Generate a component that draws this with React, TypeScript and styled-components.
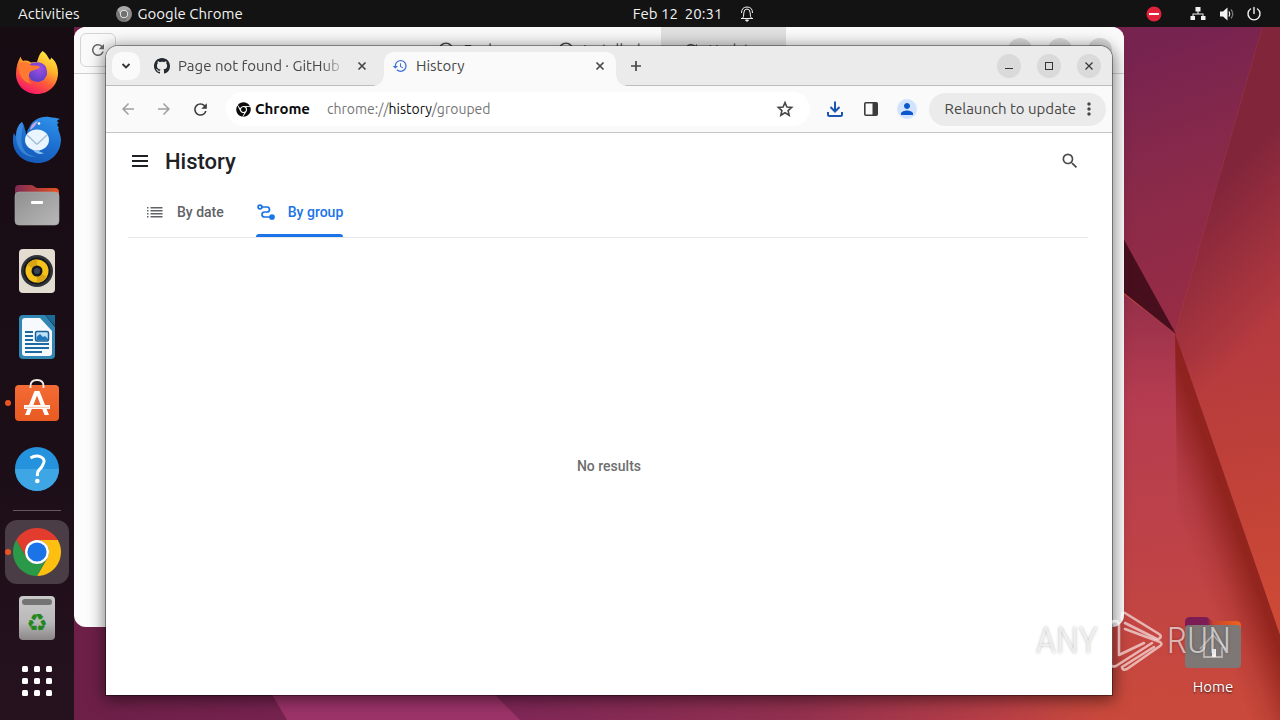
import React from "react";
import styled, { createGlobalStyle, css } from "styled-components";
import { FaChrome } from "react-icons/fa";
import {
  MdArrowBack,
  MdArrowForward,
  MdHistory,
  MdMoreVert,
  MdOutlineCheckCircle,
  MdOutlineExplore,
  MdPerson,
  MdRefresh,
  MdSearch,
} from "react-icons/md";

const uiFont = `"Ubuntu", "Noto Sans", "Open Sans", sans-serif`;

const GlobalStyle = createGlobalStyle`
  *, *::before, *::after { box-sizing: border-box; }
  body { margin: 0; font-family: ${uiFont}; font-size: 15px; line-height: 20px; }
  button { font: inherit; color: inherit; background: none; border: 0; padding: 0; margin: 0; }
  h1, p { margin: 0; }
  svg { display: block; flex: none; }
`;

const Desktop = styled.div`
  position: relative;
  display: flex;
  flex-direction: column;
  height: 100vh;
  overflow: hidden;
  background: #6a1e45;
`;

const WallpaperArt = styled.svg`
  position: absolute;
  inset: 0;
  width: 100%;
  height: 100%;
`;

/* ---------- top panel ---------- */

const TopPanel = styled.header`
  position: relative;
  display: flex;
  align-items: center;
  height: 27px;
  flex: none;
  background: #131313;
  color: #f2f2f2;
`;

const PanelSide = styled.div<{ $end?: boolean }>`
  flex: 1 1 0;
  display: flex;
  align-items: center;
  justify-content: ${(p) => (p.$end ? "flex-end" : "flex-start")};
  padding: ${(p) => (p.$end ? "0 18px 0 0" : "0 0 0 18px")};
  gap: ${(p) => (p.$end ? "12px" : "36px")};
`;

const PanelButton = styled.button<{ $gap?: number }>`
  display: flex;
  align-items: center;
  gap: ${(p) => p.$gap ?? 6}px;
  white-space: pre;
`;

const ClockArea = styled.div`
  padding-left: 108px;
`;

const RecordButton = styled(PanelButton)`
  margin-right: 16px;
`;

/* ---------- dock ---------- */

const Body = styled.div`
  position: relative;
  flex: 1;
  display: flex;
  min-height: 0;
`;

const Dock = styled.nav`
  width: 74px;
  flex: none;
  display: flex;
  flex-direction: column;
  align-items: center;
  gap: 2px;
  padding-top: 14px;
  background: linear-gradient(#180c13, #1b0e17 60%, #26121f);
`;

const DockItem = styled.button<{ $active?: boolean; $running?: boolean; $short?: boolean }>`
  position: relative;
  display: grid;
  place-items: center;
  width: 64px;
  height: ${(p) => (p.$short ? 58 : 64)}px;
  flex: none;
  border-radius: 12px;
  background: ${(p) => (p.$active ? "#4a3d45" : "transparent")};
  ${(p) =>
    p.$running &&
    css`
      &::before {
        content: "";
        position: absolute;
        left: 0;
        top: 29px;
        width: 6px;
        height: 6px;
        border-radius: 50%;
        background: #e95420;
      }
    `}
`;

const DockRule = styled.hr`
  width: 48px;
  height: 1px;
  margin: 7px 0;
  border: 0;
  background: #66595f;
  flex: none;
`;

const Workspace = styled.main`
  position: relative;
  flex: 1;
  min-width: 0;
`;

/* ---------- software window behind ---------- */

const StoreWindow = styled.section`
  position: absolute;
  inset: 0 156px 93px 0;
  border-radius: 12px;
  background: #fcfcfc;
  overflow: hidden;
`;

const StoreHeader = styled.div`
  display: grid;
  grid-template-columns: 1fr auto 1fr;
  align-items: center;
  height: 47px;
  padding: 0 12px 0 6px;
  background: #fafafa;
  border-bottom: 1px solid #d0d0d0;
  color: #4a4a4a;
`;

const StoreRefresh = styled.button`
  display: grid;
  place-items: center;
  width: 36px;
  height: 34px;
  border: 1px solid #d4d4d4;
  border-radius: 6px;
  color: #666;
`;

const StoreTabs = styled.div`
  display: flex;
  align-self: stretch;
  padding-left: 10px;
`;

const StoreTab = styled.button<{ $active?: boolean }>`
  display: flex;
  align-items: center;
  gap: 8px;
  padding: 0 21px;
  height: 46px;
  background: ${(p) => (p.$active ? "#e0e0e0" : "transparent")};
`;

const WindowControls = styled.div`
  display: flex;
  align-items: center;
  justify-content: flex-end;
  gap: 16px;
`;

const WindowControl = styled.button`
  display: grid;
  place-items: center;
  width: 24px;
  height: 24px;
  border-radius: 50%;
  background: #dadada;
  color: #333;
`;

/* ---------- browser ---------- */

const BrowserWindow = styled.section`
  position: absolute;
  inset: 19px 168px 25px 32px;
  display: flex;
  flex-direction: column;
  border-radius: 12px 12px 0 0;
  background: #fff;
  box-shadow: 0 0 0 1px rgba(0, 0, 0, 0.36), 0 3px 16px 2px rgba(0, 0, 0, 0.5);
`;

const TabStrip = styled.div`
  display: flex;
  align-items: flex-end;
  height: 40px;
  flex: none;
  padding: 0 11px 0 6px;
  background: #ebebeb;
  border-bottom: 1px solid #bdbdbd;
  border-radius: 12px 12px 0 0;
  color: #474747;
`;

const TabSearch = styled.button`
  display: grid;
  place-items: center;
  width: 28px;
  height: 28px;
  margin: 0 6px 5px 0;
  border-radius: 10px;
  background: #fafafa;
`;

const Tab = styled.div<{ $active?: boolean }>`
  position: relative;
  display: flex;
  align-items: center;
  gap: 8px;
  width: 232px;
  height: 34px;
  margin: 0 ${(p) => (p.$active ? 0 : 6)}px -1px 0;
  padding: 0 8px 6px;
  border-radius: 10px 10px 0 0;
  ${(p) =>
    p.$active &&
    css`
      background: #fafafa;
      &::before,
      &::after {
        content: "";
        position: absolute;
        bottom: 0;
        width: 10px;
        height: 10px;
      }
      &::before {
        left: -10px;
        background: radial-gradient(circle at 0 0, transparent 9px, #fafafa 10px);
      }
      &::after {
        right: -10px;
        background: radial-gradient(circle at 100% 0, transparent 9px, #fafafa 10px);
      }
    `}
`;

const TabTitle = styled.span<{ $fade?: boolean }>`
  flex: 1;
  overflow: hidden;
  white-space: nowrap;
  ${(p) =>
    p.$fade &&
    css`
      mask-image: linear-gradient(90deg, #000 86%, transparent);
    `}
`;

const TabClose = styled.button`
  display: grid;
  place-items: center;
  width: 16px;
  height: 16px;
`;

const NewTab = styled.button`
  display: grid;
  place-items: center;
  width: 28px;
  height: 28px;
  margin: 0 auto 5px 6px;
`;

const StripControls = styled(WindowControls)`
  padding-bottom: 7px;
`;

const Toolbar = styled.div`
  display: flex;
  align-items: center;
  gap: 4px;
  height: 47px;
  flex: none;
  padding: 0 6px;
  background: #fafafa;
  border-bottom: 1px solid #c4c4c4;
  color: #474747;
`;

const ToolButton = styled.button<{ $disabled?: boolean }>`
  display: grid;
  place-items: center;
  width: 32px;
  height: 32px;
  color: ${(p) => (p.$disabled ? "#a0a0a0" : "#3c3c3c")};
`;

const Omnibox = styled.form`
  flex: 1;
  display: flex;
  align-items: center;
  height: 34px;
  margin: 0 5px 0 6px;
  padding: 0 16px 0 5px;
  border-radius: 17px;
  background: #fff;
`;

const SiteChip = styled.button`
  display: flex;
  align-items: center;
  gap: 4px;
  height: 26px;
  padding: 0 7px 0 5px;
  border-radius: 13px;
  font-weight: 600;
  color: #0c0c0c;
`;

const Address = styled.a`
  flex: 1;
  padding-left: 10px;
  font-size: 14px;
  color: #757575;
  text-decoration: none;
  b {
    font-weight: 400;
    color: #111;
  }
`;

const Avatar = styled.span`
  display: grid;
  place-items: center;
  width: 20px;
  height: 20px;
  border-radius: 50%;
  background: #d3e3fd;
  color: #0b57d0;
`;

const UpdateButton = styled.button`
  display: flex;
  align-items: center;
  gap: 3px;
  height: 33px;
  margin-left: 2px;
  padding: 0 7px 0 16px;
  border-radius: 17px;
  background: #ebebeb;
  color: #474747;
`;

/* ---------- history page ---------- */

const Page = styled.div`
  flex: 1;
  display: flex;
  flex-direction: column;
  font-family: Roboto, sans-serif;
  font-size: 14px;
`;

const PageHeader = styled.header`
  display: flex;
  align-items: center;
  height: 56px;
  padding: 0 32px 0 24px;
  gap: 15px;
  color: #202124;
`;

const PageTitle = styled.h1`
  flex: 1;
  padding-top: 2px;
  font-size: 22px;
  line-height: 28px;
  font-weight: 500;
`;

const HeaderButton = styled.button`
  display: grid;
  place-items: center;
  width: 20px;
  height: 20px;
`;

const ViewTabs = styled.div`
  display: flex;
  gap: 32px;
  height: 49px;
  margin: 0 24px 0 22px;
  padding-left: 18px;
  border-bottom: 1px solid #e8e8e8;
`;

const ViewTab = styled.button<{ $active?: boolean }>`
  display: flex;
  align-items: center;
  gap: 12px;
  height: 48px;
  padding-bottom: 2px;
  font-weight: 500;
  color: ${(p) => (p.$active ? "#1a73e8" : "#5f6368")};
  position: relative;
  ${(p) =>
    p.$active &&
    css`
      &::after {
        content: "";
        position: absolute;
        inset: auto 0 0 0;
        height: 3px;
        border-radius: 3px 3px 0 0;
        background: #1a73e8;
      }
    `}
`;

const EmptyState = styled.p`
  flex: 1;
  display: grid;
  place-items: center;
  padding-bottom: 2px;
  font-weight: 500;
  color: #6e6e6e;
`;

/* ---------- desktop items ---------- */

const HomeIcon = styled.button`
  position: absolute;
  right: 39px;
  bottom: 23px;
  display: flex;
  flex-direction: column;
  align-items: center;
  gap: 8px;
  color: #fff;
  text-shadow: 0 1px 2px rgba(0, 0, 0, 0.7);
`;

const Watermark = styled.div`
  position: absolute;
  right: 49px;
  bottom: 47px;
  display: flex;
  align-items: center;
  color: rgba(255, 255, 255, 0.65);
  font-family: "Ubuntu Condensed", "Roboto Condensed", "Open Sans Condensed", Roboto, sans-serif;
  font-weight: 300;
  font-size: 37px;
  line-height: 62px;
  text-shadow: 0 0 3px rgba(0, 0, 0, 0.3);
  pointer-events: none;
  svg {
    margin: 0 3px 0 10px;
  }
`;

/* ---------- drawings ---------- */

const Wallpaper = () => (
  <WallpaperArt viewBox="0 0 1280 720" preserveAspectRatio="none" aria-hidden="true">
    <defs>
      <linearGradient id="wBase" x1="0" x2="1">
        <stop offset="0" stopColor="#6a1e45" />
        <stop offset=".4" stopColor="#7f2757" />
        <stop offset=".62" stopColor="#92304f" />
        <stop offset=".78" stopColor="#b83f46" />
        <stop offset=".86" stopColor="#c9493c" />
        <stop offset="1" stopColor="#c84a3c" />
      </linearGradient>
      <linearGradient id="wUpper" gradientUnits="userSpaceOnUse" x1="1110" y1="60" x2="1200" y2="320">
        <stop offset="0" stopColor="#772350" />
        <stop offset=".5" stopColor="#8a2a49" />
        <stop offset="1" stopColor="#982c45" />
      </linearGradient>
      <linearGradient id="wRight" gradientUnits="userSpaceOnUse" x1="1200" y1="200" x2="1300" y2="300">
        <stop offset="0" stopColor="#81253b" />
        <stop offset="1" stopColor="#b63b3f" />
      </linearGradient>
      <linearGradient id="wRightLow" gradientUnits="userSpaceOnUse" x1="1230" y1="350" x2="1270" y2="600">
        <stop offset="0" stopColor="#c8452f" stopOpacity="0" />
        <stop offset="1" stopColor="#cc4936" />
      </linearGradient>
      <linearGradient id="wLower" gradientUnits="userSpaceOnUse" x1="1130" y1="300" x2="1140" y2="700">
        <stop offset="0" stopColor="#97304a" />
        <stop offset=".25" stopColor="#b53c50" />
        <stop offset=".6" stopColor="#bd4248" />
        <stop offset="1" stopColor="#c9493c" />
      </linearGradient>
      <linearGradient id="wShade" gradientUnits="userSpaceOnUse" x1="1205" y1="595" x2="1253" y2="578">
        <stop offset="0" stopColor="#8c2018" stopOpacity="0" />
        <stop offset=".4" stopColor="#8c2018" stopOpacity=".2" />
        <stop offset="1" stopColor="#881d14" stopOpacity=".8" />
      </linearGradient>
    </defs>
    <rect width="1280" height="720" fill="url(#wBase)" />
    <path d="M240 640 287 720H520L440 640Z" fill="#9c3369" />
    <path d="M1040 0H1270L1175 333 1040 90Z" fill="url(#wUpper)" />
    <path d="M1270 0H1280V640L1175 333Z" fill="url(#wRight)" />
    <path d="M1175 333 1280 300V640Z" fill="url(#wRightLow)" />
    <path d="M1100 276 1175 333 1280 635V720H1100Z" fill="url(#wLower)" />
    <path d="M1175 333 1280 635V720H1180Z" fill="url(#wShade)" />
    <path d="M1090 178 1176 334 1090 266Z" fill="#470f1e" />
  </WallpaperArt>
);

const FirefoxLogo = () => (
  <svg width="48" height="48" viewBox="0 0 48 48" aria-hidden="true">
    <defs>
      <linearGradient id="ffA" x1=".8" y1="0" x2=".3" y2="1">
        <stop offset="0" stopColor="#fff04a" />
        <stop offset=".35" stopColor="#ffb52a" />
        <stop offset=".65" stopColor="#ff5a38" />
        <stop offset="1" stopColor="#f5156c" />
      </linearGradient>
      <radialGradient id="ffB" cx=".6" cy=".3" r=".7">
        <stop offset="0" stopColor="#a04fe0" />
        <stop offset="1" stopColor="#5a3fc8" />
      </radialGradient>
    </defs>
    <path d="M29.500 2C33 4 35 8 36.500 10.500C37.500 11.500 38 9.500 38 8.500C43 12 45 18 45 24C45 36 36 45 24 45C12 45 3 36 3 25C3 18 5 12 7.600 7.500C8 9.500 9 11 10.500 12C13 11 16 12 18 13.500C20 12.500 22 13 24 13C25.500 9 26 5 29.500 2Z" fill="url(#ffA)" />
    <path d="M16 16C20 12 30 12 33 18L34 26 26 33Z" fill="#7d45d6" />
    <circle cx="24.500" cy="23.500" r="9.500" fill="url(#ffB)" />
    <path d="M5 17C9 11.500 15 12 17 16C21 17 25 16 27 18C25 21 19 21 17 23C15 27 15 32 19 35C11 34 6 27 5 17Z" fill="#ff7a30" />
  </svg>
);

const ThunderbirdLogo = () => (
  <svg width="48" height="48" viewBox="0 0 48 48" aria-hidden="true">
    <defs>
      <linearGradient id="tbA" x1=".7" y1="0" x2=".3" y2="1">
        <stop offset="0" stopColor="#2f8fe8" />
        <stop offset=".5" stopColor="#1c6fd0" />
        <stop offset="1" stopColor="#1558b4" />
      </linearGradient>
    </defs>
    <path d="M16 13C20 4 28 1 36 2C40 2.500 44 3 47 4C44 5 43 6 46 8C43.500 8.500 44 10 46 13C44 13 47 17 48 24C48 38 38 48 25 48C11 48 0 39 0 26C0 22 0 20 1 18C2 20 2 20 3 21C3 15 5 10 9 7C12 11 12 17 14 20C14 18 14 15 16 13Z" fill="url(#tbA)" />
    <path d="M3 21C3 15 5 10 9 7C11 12 7 20 9 30C11 38 17 41 24 42C11 43 3 34 3 21Z" fill="#4a9ae8" opacity=".6" />
    <path d="M17 15C18 10 21 7 25 6C23 9 22 12 17 15Z" fill="#c8a6e0" />
    <circle cx="26" cy="8.500" r="1.300" fill="#fff" />
    <ellipse cx="24" cy="25" rx="12" ry="10.500" fill="#eaf5ff" />
    <path d="M14 20 23 28.500Q24 29.500 25 28.500L34 20" fill="none" stroke="#a4bfd6" strokeWidth="1.500" />
    <path d="M24 35C27 37 29 38 31 38C28 40 23 39 20 35Z" fill="#8fc6f6" />
  </svg>
);

const FilesLogo = () => (
  <svg width="48" height="48" viewBox="0 0 48 48" aria-hidden="true">
    <defs>
      <linearGradient id="flA">
        <stop offset="0" stopColor="#7d2a55" />
        <stop offset="1" stopColor="#e8521f" />
      </linearGradient>
      <linearGradient id="flB" x1="0" y1="0" x2="1" y2="1">
        <stop offset="0" stopColor="#8f8f8f" />
        <stop offset="1" stopColor="#b8b8b8" />
      </linearGradient>
    </defs>
    <path d="M2 8Q2 4 6 4H18Q20 4 21.500 5.500T25 7H42Q46 7 46 11V20H2Z" fill="url(#flA)" />
    <rect x="2" y="11" width="44" height="33" rx="4" fill="url(#flB)" stroke="#a8a8a8" strokeWidth=".6" />
    <rect x="18" y="20" width="12" height="3" rx="1" fill="#fff" />
  </svg>
);

const RhythmboxLogo = () => (
  <svg width="48" height="48" viewBox="0 0 48 48" aria-hidden="true">
    <rect x="6" y="2" width="36" height="44" rx="4" fill="#e2ddd0" />
    <circle cx="24" cy="24" r="16" fill="#30343a" />
    <circle cx="24" cy="24" r="13.500" fill="#17191c" />
    <circle cx="24" cy="24" r="11.500" fill="#f5c21c" />
    <path d="M24 24 14 18A11.500 11.500 0 0 1 24 12.500ZM24 24 34 30A11.500 11.500 0 0 1 24 35.500Z" fill="#d9a514" />
    <circle cx="24" cy="24" r="5.500" fill="#15181e" />
    <circle cx="24" cy="24" r="3" fill="#3a4658" />
  </svg>
);

const WriterLogo = () => (
  <svg width="48" height="48" viewBox="0 0 48 48" aria-hidden="true">
    <path d="M10 2H32L42 14V42Q42 46 38 46H10Q6 46 6 42V6Q6 2 10 2Z" fill="#3187b4" />
    <path d="M32 2H42V13Z" fill="#1c6a98" />
    <path d="M12 5H27L39 18V40Q39 43 36 43H12Q9 43 9 40V8Q9 5 12 5Z" fill="#f6fafc" />
    <path d="M12 19H20M12 23H20M12 27H20M12 31H36M12 35H36M12 39H29" stroke="#1a6ba0" strokeWidth="2" />
    <rect x="22.500" y="18.500" width="13" height="9.500" rx="1.500" fill="#bfe0f5" stroke="#1a5f96" strokeWidth="1.500" />
    <path d="M23.500 27V24L27 21 30 24 32 23 35 26V27Z" fill="#1d77bd" />
  </svg>
);

const SoftwareLogo = () => (
  <svg width="48" height="48" viewBox="0 0 48 48" aria-hidden="true">
    <defs>
      <linearGradient id="swA" x1="0" y1="0" x2="0" y2="1">
        <stop offset="0" stopColor="#f46b35" />
        <stop offset="1" stopColor="#e85a22" />
      </linearGradient>
    </defs>
    <rect x="2" y="6" width="44" height="36" rx="4" fill="url(#swA)" />
    <path d="M17.500 9V7Q17.500 1 24 1T30.500 7V9" fill="none" stroke="#f3efe6" strokeWidth="1.800" />
    <path d="M21.500 12H26.500L36 36H31.500L24 16.500 16.500 36H12Z" fill="#fff" />
    <path d="M11 26H37V30H11Z" fill="#fff" />
    <path d="M12 28.300H36" stroke="#f0a27e" strokeWidth=".7" />
  </svg>
);

const HelpLogo = () => (
  <svg width="48" height="48" viewBox="0 0 48 48" aria-hidden="true">
    <circle cx="24" cy="24" r="22" fill="#2492dc" />
    <path d="M2 24A22 22 0 0 0 46 24Z" fill="#3fa6e6" />
    <path d="M17.500 13Q23 9.500 28 12T30 19.500Q29 22.500 26.500 24.500T24.500 31" fill="none" stroke="#fff" strokeWidth="3" />
    <circle cx="24.300" cy="36" r="2.300" fill="#fff" />
  </svg>
);

const ChromeLogo = ({ size = 48, mono = false }: { size?: number; mono?: boolean }) => (
  <svg width={size} height={size} viewBox="0 0 48 48" aria-hidden="true">
    <path d="M3.220 12A24 24 0 0 1 44.780 12H24A12 12 0 0 0 13.610 30Z" fill={mono ? "#a8a8a8" : "#e33b2e"} />
    <path d="M44.780 12A24 24 0 0 1 24 48L34.390 30A12 12 0 0 0 24 12Z" fill={mono ? "#8a8a8a" : "#fdc010"} />
    <path d="M24 48A24 24 0 0 1 3.220 12L13.610 30A12 12 0 0 0 34.390 30Z" fill={mono ? "#777" : "#2a9a48"} />
    <circle cx="24" cy="24" r="12" fill="#fff" />
    <circle cx="24" cy="24" r="9.600" fill={mono ? "#707070" : "#1b73e8"} />
  </svg>
);

const TrashArt = styled.span`
  display: flex;
  flex-direction: column;
  align-items: center;
  gap: 8px;
  width: 36px;
  height: 44px;
  padding-top: 3px;
  border-radius: 4px;
  background: linear-gradient(#c9c9c9, #b9b9b9 60%, #8b8588);
  color: #23871f;
  font-family: "DejaVu Sans", sans-serif;
  font-size: 24px;
  &::before {
    content: "";
    width: 30px;
    height: 6px;
    border-radius: 3px;
    background: #747474;
  }
`;

const AppsGlyph = () => (
  <svg width="30" height="30" viewBox="0 0 30 30" fill="#fff" aria-hidden="true">
    {[0, 12, 24].map((y) => [0, 12, 24].map((x) => <rect key={`${x}-${y}`} x={x} y={y} width="6" height="6" rx="1.500" />))}
  </svg>
);

const BellGlyph = () => (
  <svg width="16" height="16" viewBox="0 0 16 16" fill="none" stroke="#f2f2f2" aria-hidden="true">
    <path d="M2 12.500H14M3.500 12.500Q4.800 11 4.800 7Q4.800 3 8 3T11.200 7Q11.200 11 12.500 12.500M2.500 7Q2.500 1 8 1T13.500 7" />
    <path d="M6.500 14H9.500L8 15.500Z" fill="#f2f2f2" />
  </svg>
);

const NetworkGlyph = () => (
  <svg width="16" height="16" viewBox="0 0 16 16" fill="#f2f2f2" aria-hidden="true">
    <path d="M5.500 1H10.500V5.500H8.500V7.500H13.500V10H15.500V14H11V10H12.500V8.500H3.500V10H5V14H.5V10H2.500V7.500H7.500V5.500H5.500Z" />
  </svg>
);

const VolumeGlyph = () => (
  <svg width="16" height="16" viewBox="0 0 16 16" fill="none" aria-hidden="true">
    <path d="M2 5.500H5L9.500 1.500V14.500L5 10.500H2Z" fill="#f2f2f2" />
    <path d="M11 5.500Q12.500 8 11 10.500" stroke="#f2f2f2" strokeWidth="1.300" />
    <path d="M13 3.500Q16.500 8 13 12.500" stroke="#777" strokeWidth="1.300" />
  </svg>
);

const PowerGlyph = () => (
  <svg width="16" height="16" viewBox="0 0 16 16" fill="none" stroke="#f2f2f2" strokeWidth="1.400" strokeLinecap="round" aria-hidden="true">
    <path d="M8 1.500V7.500M4.500 3A6 6 0 1 0 11.500 3" />
  </svg>
);

const BlockGlyph = () => (
  <svg width="16" height="16" viewBox="0 0 16 16" aria-hidden="true">
    <circle cx="8" cy="8" r="7.500" fill="#e0223a" />
    <path d="M3 8H13" stroke="#fff" strokeWidth="2" />
  </svg>
);

const GithubGlyph = () => (
  <svg width="16" height="16" viewBox="0 0 16 16" fill="#24292f" aria-hidden="true">
    <path d="M8 0C3.58 0 0 3.58 0 8c0 3.54 2.29 6.53 5.47 7.59.4.07.55-.17.55-.38 0-.19-.01-.82-.01-1.49-2.01.37-2.53-.49-2.69-.94-.09-.23-.48-.94-.82-1.13-.28-.15-.68-.52-.01-.53.63-.01 1.08.58 1.23.82.72 1.21 1.87.87 2.33.66.07-.52.28-.87.51-1.07-1.78-.2-3.64-.89-3.64-3.95 0-.87.31-1.59.82-2.15-.08-.2-.36-1.02.08-2.12 0 0 .67-.21 2.2.82.64-.18 1.32-.27 2-.27s1.36.09 2 .27c1.53-1.04 2.2-.82 2.2-.82.44 1.1.16 1.92.08 2.12.51.56.82 1.27.82 2.15 0 3.07-1.87 3.75-3.65 3.95.29.25.54.73.54 1.48 0 1.07-.01 1.93-.01 2.2 0 .21.15.46.55.38A8.01 8.01 0 0 0 16 8c0-4.42-3.58-8-8-8Z" />
  </svg>
);

const StarGlyph = () => (
  <svg width="18" height="18" viewBox="0 0 18 18" fill="none" stroke="currentColor" strokeWidth="1.600" aria-hidden="true">
    <path d="M9 2.600 10.900 7 15.700 7.400 12.100 10.600 13.200 15.300 9 12.800 4.800 15.300 5.900 10.600 2.300 7.400 7.100 7Z" />
  </svg>
);

const MinimizeGlyph = () => (
  <svg width="10" height="10" viewBox="0 0 10 10" stroke="currentColor" aria-hidden="true">
    <path d="M1 7.500H9" />
  </svg>
);

const MaximizeGlyph = () => (
  <svg width="10" height="10" viewBox="0 0 10 10" fill="none" stroke="currentColor" aria-hidden="true">
    <rect x="1.500" y="1.500" width="7" height="7" />
  </svg>
);

const CrossGlyph = ({ weight = 1.2 }: { weight?: number }) => (
  <svg width="10" height="10" viewBox="0 0 10 10" stroke="currentColor" strokeWidth={weight} aria-hidden="true">
    <path d="M1.500 1.500 8.500 8.500M8.500 1.500 1.500 8.500" />
  </svg>
);

const PlusGlyph = () => (
  <svg width="12" height="12" viewBox="0 0 12 12" stroke="currentColor" strokeWidth="1.700" aria-hidden="true">
    <path d="M6 1V11M1 6H11" />
  </svg>
);

const ChevronGlyph = () => (
  <svg width="10" height="8" viewBox="0 0 10 8" fill="none" stroke="#333" strokeWidth="1.800" aria-hidden="true">
    <path d="M1.500 2 5 5.500 8.500 2" />
  </svg>
);

const DownloadGlyph = () => (
  <svg width="18" height="18" viewBox="0 0 18 18" fill="none" stroke="#1a56b0" strokeWidth="2" aria-hidden="true">
    <path d="M9 1.500V11M4.500 7 9 11.500 13.500 7M2 12V14.500Q2 16 3.500 16H14.500Q16 16 16 14.500V12" />
  </svg>
);

const SidePanelGlyph = () => (
  <svg width="16" height="16" viewBox="0 0 16 16" aria-hidden="true">
    <rect x="1.800" y="1.800" width="12.400" height="12.400" rx="1" fill="none" stroke="#3c3c3c" strokeWidth="1.600" />
    <path d="M9.500 2H14V14H9.500Z" fill="#3c3c3c" />
  </svg>
);

const MenuGlyph = () => (
  <svg width="16" height="12" viewBox="0 0 16 12" fill="currentColor" aria-hidden="true">
    <path d="M0 0H16V2H0ZM0 5H16V7H0ZM0 10H16V12H0Z" />
  </svg>
);

const ListGlyph = () => (
  <svg width="19" height="18" viewBox="0 0 19 18" fill="currentColor" aria-hidden="true">
    <path d="M1 4H2.500V5.500H1ZM1 7H2.500V8.500H1ZM1 10H2.500V11.500H1ZM1 13H2.500V14.500H1ZM4.500 4H16.500V5.500H4.500ZM4.500 7H16.500V8.500H4.500ZM4.500 10H16.500V11.500H4.500ZM4.500 13H16.500V14.500H4.500Z" />
  </svg>
);

const GroupGlyph = () => (
  <svg width="20" height="18" viewBox="0 0 20 18" fill="none" stroke="currentColor" strokeWidth="1.700" aria-hidden="true">
    <circle cx="4" cy="4" r="1.900" />
    <circle cx="16" cy="14" r="2" fill="currentColor" />
    <path d="M6 4H11Q13.500 4 13.500 6.500T11 9H8.500Q6 9 6 11.500T8.500 14H14" />
  </svg>
);

const HomeFolder = () => (
  <svg width="56" height="52" viewBox="0 0 56 52" aria-hidden="true">
    <defs>
      <linearGradient id="hmA">
        <stop offset=".4" stopColor="#7c1c55" />
        <stop offset=".5" stopColor="#c8432e" />
        <stop offset="1" stopColor="#f0641f" />
      </linearGradient>
    </defs>
    <path d="M0 5Q0 0 5 0H20Q23 0 24.500 2T29 4H51Q56 4 56 9V22H0Z" fill="url(#hmA)" />
    <rect y="8" width="56" height="43" rx="4" fill="#7d7876" />
    <path d="M15 32 28 18 41 32M19 30V40H37V30" fill="none" stroke="#b9b4b2" strokeWidth="1.800" />
    <path d="M27 32H31V40H27Z" fill="#f2f2f2" />
  </svg>
);

const PlayMark = () => (
  <svg width="56" height="64" viewBox="0 0 56 64" fill="none" stroke="#fff" strokeOpacity=".6" strokeWidth="2.600" strokeLinecap="round" strokeLinejoin="round" aria-hidden="true">
    <path d="M14 10V6Q14 3 17 4L51 25Q54 27 52 29T47 29L17 14" />
    <path d="M17 20 52 33Q55 35 52 37L19 60Q14 62 14 58L46 38" />
    <path d="M44 34 8 57Q3 59 3 54V16Q3 12 7 12T11 16V46L36 34" />
  </svg>
);

/* ---------- application ---------- */

const dockApps = [
  { label: "Firefox", art: <FirefoxLogo /> },
  { label: "Thunderbird", art: <ThunderbirdLogo /> },
  { label: "Files", art: <FilesLogo /> },
  { label: "Rhythmbox", art: <RhythmboxLogo /> },
  { label: "Writer", art: <WriterLogo /> },
  { label: "Software", art: <SoftwareLogo />, running: true },
  { label: "Help", art: <HelpLogo /> },
];

const Controls = () => (
  <>
    <WindowControl aria-label="Minimize"><MinimizeGlyph /></WindowControl>
    <WindowControl aria-label="Maximize"><MaximizeGlyph /></WindowControl>
    <WindowControl aria-label="Close window"><CrossGlyph /></WindowControl>
  </>
);

export default function App() {
  return (
    <Desktop>
      <GlobalStyle />
      <Wallpaper />
      <TopPanel>
        <PanelSide>
          <PanelButton>Activities</PanelButton>
          <PanelButton><ChromeLogo size={16} mono />Google Chrome</PanelButton>
        </PanelSide>
        <ClockArea>
          <PanelButton $gap={17}>{"Feb 12  20:31"}<BellGlyph /></PanelButton>
        </ClockArea>
        <PanelSide $end>
          <RecordButton aria-label="Do not disturb"><BlockGlyph /></RecordButton>
          <PanelButton $gap={12} aria-label="System menu">
            <NetworkGlyph /><VolumeGlyph /><PowerGlyph />
          </PanelButton>
        </PanelSide>
      </TopPanel>

      <Body>
        <Dock aria-label="Dock">
          {dockApps.map((app) => (
            <DockItem key={app.label} aria-label={app.label} $running={app.running}>{app.art}</DockItem>
          ))}
          <DockRule />
          <DockItem aria-label="Google Chrome" $active $running><ChromeLogo /></DockItem>
          <DockItem aria-label="Trash"><TrashArt>♻</TrashArt></DockItem>
          <DockItem aria-label="Show applications" $short><AppsGlyph /></DockItem>
        </Dock>

        <Workspace>
          <HomeIcon><HomeFolder />Home</HomeIcon>

          <StoreWindow>
            <StoreHeader>
              <StoreRefresh aria-label="Refresh"><MdRefresh size={18} /></StoreRefresh>
              <StoreTabs>
                <StoreTab><MdOutlineExplore size={18} />Explore</StoreTab>
                <StoreTab><MdOutlineCheckCircle size={18} />Installed</StoreTab>
                <StoreTab $active><MdRefresh size={18} />Updates</StoreTab>
              </StoreTabs>
              <WindowControls><Controls /></WindowControls>
            </StoreHeader>
          </StoreWindow>

          <BrowserWindow>
            <TabStrip>
              <TabSearch aria-label="Search tabs"><ChevronGlyph /></TabSearch>
              <Tab>
                <GithubGlyph />
                <TabTitle $fade>Page not found · GitHub</TabTitle>
                <TabClose aria-label="Close tab"><CrossGlyph weight={1.7} /></TabClose>
              </Tab>
              <Tab $active>
                <MdHistory size={16} color="#3b73d9" />
                <TabTitle>History</TabTitle>
                <TabClose aria-label="Close tab"><CrossGlyph weight={1.7} /></TabClose>
              </Tab>
              <NewTab aria-label="New tab"><PlusGlyph /></NewTab>
              <StripControls><Controls /></StripControls>
            </TabStrip>

            <Toolbar>
              <ToolButton $disabled aria-label="Back"><MdArrowBack size={18} /></ToolButton>
              <ToolButton $disabled aria-label="Forward"><MdArrowForward size={18} /></ToolButton>
              <ToolButton aria-label="Reload"><MdRefresh size={19} /></ToolButton>
              <Omnibox>
                <SiteChip type="button"><FaChrome size={15} />Chrome</SiteChip>
                <Address href="#grouped">chrome://<b>history</b>/grouped</Address>
                <button type="button" aria-label="Bookmark"><StarGlyph /></button>
              </Omnibox>
              <ToolButton aria-label="Downloads"><DownloadGlyph /></ToolButton>
              <ToolButton aria-label="Side panel"><SidePanelGlyph /></ToolButton>
              <ToolButton aria-label="Profile"><Avatar><MdPerson size={18} /></Avatar></ToolButton>
              <UpdateButton>Relaunch to update<MdMoreVert size={20} /></UpdateButton>
            </Toolbar>

            <Page>
              <PageHeader>
                <HeaderButton aria-label="Menu"><MenuGlyph /></HeaderButton>
                <PageTitle>History</PageTitle>
                <HeaderButton aria-label="Search"><MdSearch size={20} color="#4a4a4a" /></HeaderButton>
              </PageHeader>
              <ViewTabs>
                <ViewTab><ListGlyph />By date</ViewTab>
                <ViewTab $active><GroupGlyph />By group</ViewTab>
              </ViewTabs>
              <EmptyState>No results</EmptyState>
            </Page>
          </BrowserWindow>

          <Watermark aria-hidden="true">ANY<PlayMark />RUN</Watermark>
        </Workspace>
      </Body>
    </Desktop>
  );
}
